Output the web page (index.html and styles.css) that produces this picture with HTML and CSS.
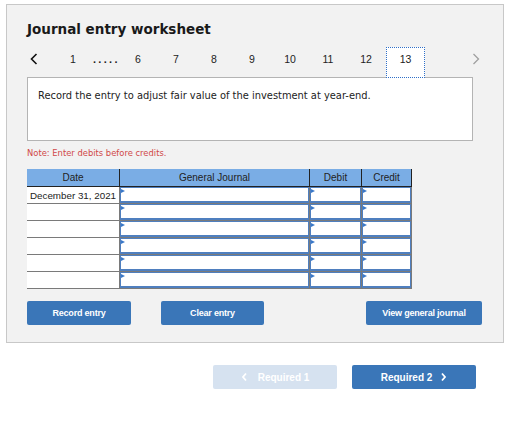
FILE: index.html
```html
<!DOCTYPE html>
<html>
<head>
<meta charset="utf-8">
<link rel="stylesheet" href="styles.css">
</head>
<body>
<div class="panel">
  <h1 class="title">Journal entry worksheet</h1>
  <div class="nav">
    <span class="arrow prev"><svg width="8" height="12" viewBox="0 0 8 12"><path d="M6.5 1 L1.5 6 L6.5 11" fill="none" stroke="#111" stroke-width="1.6"/></svg></span>
    <span class="num">1</span>
    <span class="dots">.....</span>
    <span class="num">6</span>
    <span class="num">7</span>
    <span class="num">8</span>
    <span class="num">9</span>
    <span class="num">10</span>
    <span class="num">11</span>
    <span class="num">12</span>
    <span class="num current">13</span>
    <span class="arrow next"><svg width="8" height="12" viewBox="0 0 8 12"><path d="M1.5 1 L6.5 6 L1.5 11" fill="none" stroke="#a0a0a0" stroke-width="1.3"/></svg></span>
  </div>
  <div class="prompt">Record the entry to adjust fair value of the investment at year-end.</div>
  <p class="note">Note: Enter debits before credits.</p>
  <table class="journal">
    <thead>
      <tr><th class="c-date">Date</th><th class="c-gj">General Journal</th><th class="c-dr">Debit</th><th class="c-cr">Credit</th></tr>
    </thead>
    <tbody>
      <tr><td class="date">December 31, 2021</td><td><div class="in"></div></td><td><div class="in"></div></td><td><div class="in"></div></td></tr>
      <tr><td class="date"></td><td><div class="in"></div></td><td><div class="in"></div></td><td><div class="in"></div></td></tr>
      <tr><td class="date"></td><td><div class="in"></div></td><td><div class="in"></div></td><td><div class="in"></div></td></tr>
      <tr><td class="date"></td><td><div class="in"></div></td><td><div class="in"></div></td><td><div class="in"></div></td></tr>
      <tr><td class="date"></td><td><div class="in"></div></td><td><div class="in"></div></td><td><div class="in"></div></td></tr>
      <tr><td class="date"></td><td><div class="in"></div></td><td><div class="in"></div></td><td><div class="in"></div></td></tr>
    </tbody>
  </table>
  <div class="actions">
    <button class="btn w-record">Record entry</button>
    <button class="btn w-clear">Clear entry</button>
    <button class="btn w-view">View general journal</button>
  </div>
</div>
<div class="steps">
  <button class="step disabled"><svg width="7" height="10" viewBox="0 0 7 10"><path d="M5 1.5 L2 5 L5 8.5" fill="none" stroke="#fff" stroke-width="1.8"/></svg><span>Required 1</span></button>
  <button class="step"><span>Required 2</span><svg width="7" height="10" viewBox="0 0 7 10"><path d="M2 1.5 L5 5 L2 8.5" fill="none" stroke="#fff" stroke-width="1.8"/></svg></button>
</div>
</body>
</html>
```

FILE: styles.css
```css
html, body {
  margin: 0;
  padding: 0;
  background: #ffffff;
}
body {
  font-family: "Liberation Sans", Arial, sans-serif;
  color: #222;
}
.panel {
  margin: 4px 0 0 6px;
  width: 455px;
  height: 323px;
  padding: 14px 21px 0 20px;
  background: #f2f2f2;
  border: 1px solid #c8c8c8;
  display: flex;
  flex-direction: column;
  align-items: flex-start;
}
.title {
  margin: 0;
  font-family: "DejaVu Sans", Verdana, sans-serif;
  font-size: 13.5px;
  font-weight: bold;
  line-height: 20px;
  color: #1a1a1a;
}
.nav {
  display: flex;
  align-items: flex-start;
  height: 30px;
  margin-top: 8px;
  font-size: 10.5px;
  color: #222;
}
.arrow {
  display: flex;
  align-items: center;
  height: 24px;
}
.prev {
  width: 27px;
  padding-left: 3px;
  box-sizing: border-box;
}
.next {
  margin-left: 47px;
}
.num {
  width: 38px;
  height: 24px;
  line-height: 24px;
  text-align: center;
}
.dots {
  width: 26px;
  height: 24px;
  line-height: 24px;
  font-weight: bold;
  font-size: 11px;
  letter-spacing: 2.3px;
  text-align: left;
  padding-left: 1px;
}
.num.current {
  position: relative;
  z-index: 1;
  width: 37px;
  height: 29px;
  margin-left: 1px;
  line-height: 22px;
  background: #fff;
  border: 1px dotted #2f6fc8;
}
.prompt {
  width: 434px;
  height: 50px;
  padding: 12px 0 0 10px;
  background: #fff;
  border: 1px solid #b4b4b4;
  font-family: "DejaVu Sans", Verdana, sans-serif;
  font-size: 9.9px;
  color: #222;
}
.note {
  margin: 7px 0 0 0;
  font-family: "DejaVu Sans", Verdana, sans-serif;
  font-size: 8.4px;
  line-height: 10px;
  color: #d04848;
}
.journal {
  margin-top: 11px;
  border-collapse: collapse;
  table-layout: fixed;
  width: 383px;
  font-size: 10px;
}
.journal th {
  height: 17px;
  padding: 0;
  background: #7aade5;
  font-weight: normal;
  color: #222;
  border-left: 1px solid #222;
  border-bottom: 1px solid #222;
  text-align: center;
  font-size: 10px;
}
.journal th:first-child {
  border-left: none;
}
.journal th:last-child {
  border-right: 1px solid #222;
}
.c-date { width: 92px; }
.c-gj { width: 189px; }
.c-dr { width: 51px; }
.c-cr { width: 49px; }
.journal td {
  height: 16px;
  padding: 0;
  border: 1px solid #7a7a7a;
  border-top: none;
  background: #fff;
}
.journal td:first-child {
  border-left: none;
}
.journal td.date {
  padding-left: 3px;
  font-size: 9.8px;
  color: #222;
  white-space: nowrap;
}
.in {
  position: relative;
  height: 13px;
  border: 1px solid #4f7fbf;
  border-bottom-width: 2px;
  background: #fff;
}
.in::before {
  content: "";
  position: absolute;
  left: 0;
  top: 1px;
  border-left: 4px solid #3a78c8;
  border-top: 2px solid transparent;
  border-bottom: 2px solid transparent;
}
.actions {
  display: flex;
  width: 455px;
  margin-top: 12px;
}
.btn {
  height: 24px;
  padding: 0;
  background: #3a76b8;
  border: none;
  border-radius: 2px;
  color: #fff;
  font-family: "Liberation Sans", Arial, sans-serif;
  font-weight: bold;
  font-size: 9px;
  letter-spacing: -0.2px;
}
.w-record { width: 104px; }
.w-clear { width: 103px; margin-left: 30px; }
.w-view { width: 116px; margin-left: auto; }
.steps {
  display: flex;
  gap: 15px;
  padding-left: 213px;
  margin-top: 22px;
}
.step {
  width: 124px;
  height: 24px;
  display: flex;
  align-items: center;
  justify-content: center;
  gap: 8px;
  padding: 0;
  border: none;
  border-radius: 2px;
  background: #3a76b8;
  color: #fff;
  font-family: "Liberation Sans", Arial, sans-serif;
  font-weight: bold;
  font-size: 10px;
}
.step.disabled {
  background: #d6e2f0;
  gap: 10px;
}
```
